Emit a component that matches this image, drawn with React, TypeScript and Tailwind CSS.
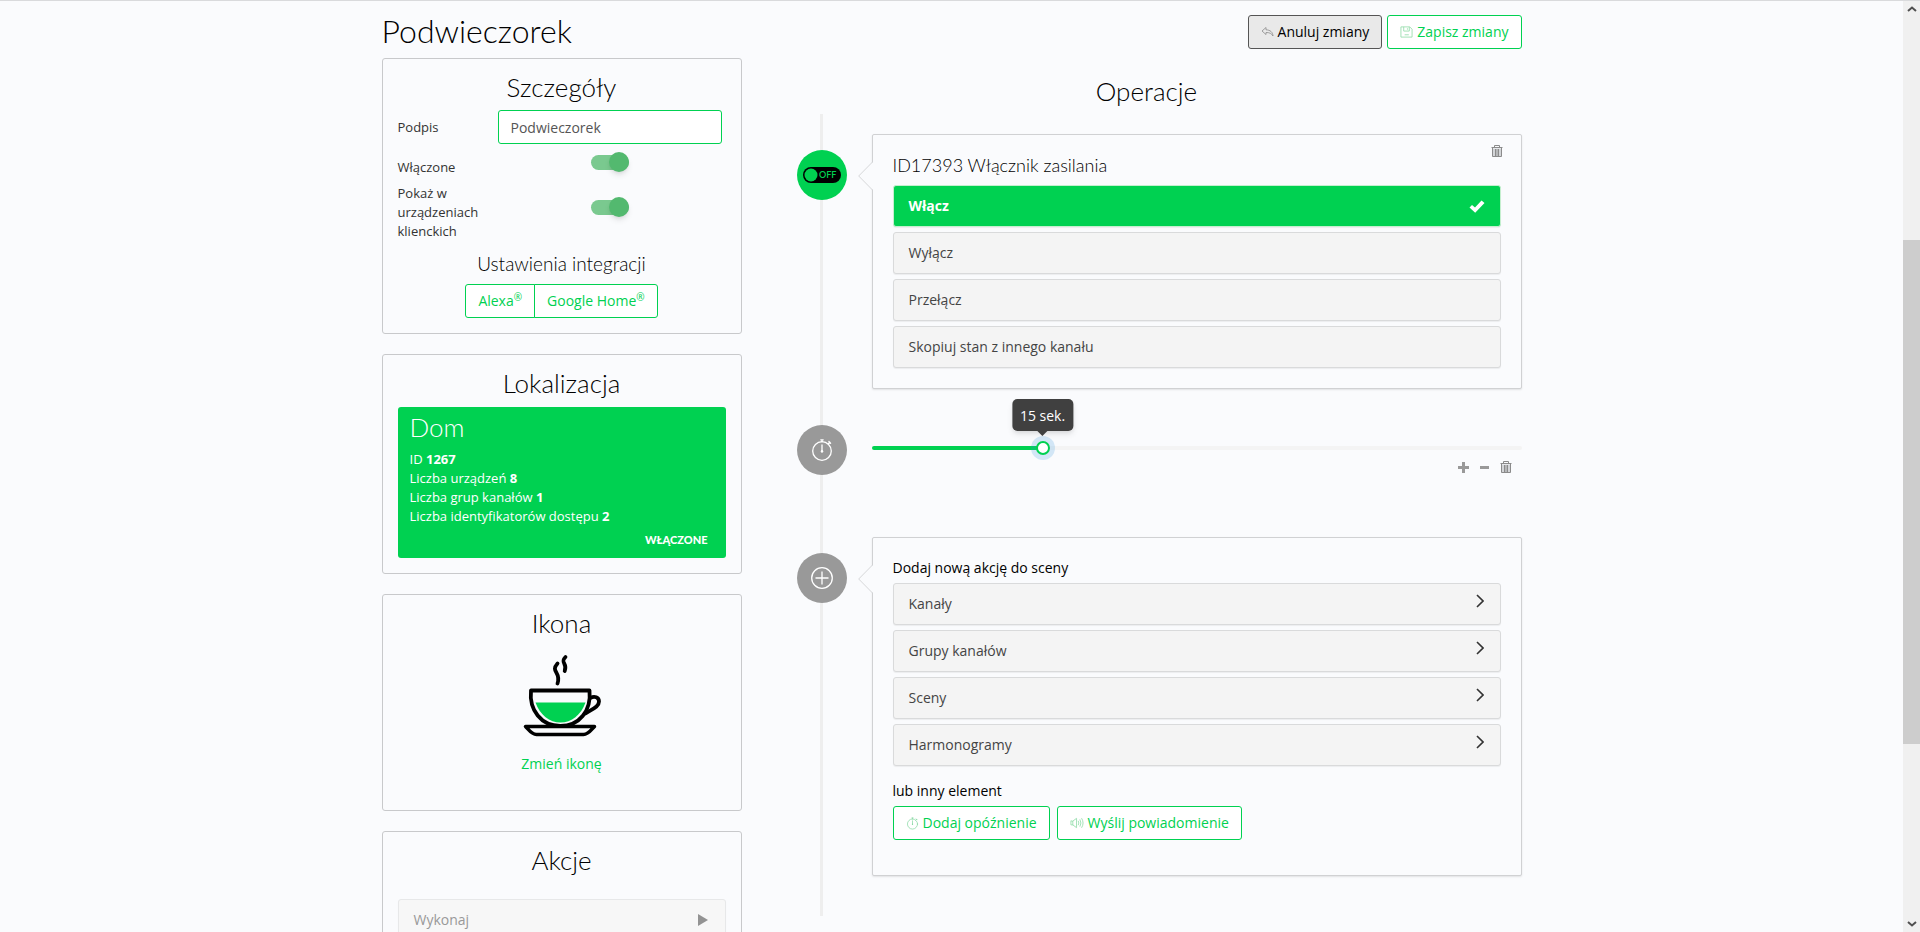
import React, { useState } from "react";

const heading = "font-[Lato,sans-serif] font-light text-black";
const outlineBtn =
  "h-[34px] rounded-[3px] border border-[#00d151] bg-white px-3 text-sm text-[#00d151] flex items-center gap-1";

function Card({ title, children, className = "" }: { title: string; children: React.ReactNode; className?: string }) {
  return (
    <section className={`rounded-[3px] border border-[#c8c9cb] px-[15px] pt-[13px] ${className}`}>
      <h2 className={`${heading} text-center text-[26px] leading-[30px]`}>{title}</h2>
      {children}
    </section>
  );
}

function Toggle({ id }: { id: string }) {
  const [on, setOn] = useState(true);
  return (
    <span className="relative flex h-5 w-[38px] items-center">
      <input
        id={id}
        type="checkbox"
        checked={on}
        onChange={() => setOn(!on)}
        className="peer h-[15px] w-full cursor-pointer appearance-none rounded-full bg-gray-300 checked:bg-[#7ac98f]"
      />
      <span className="pointer-events-none absolute left-0 size-5 rounded-full bg-white shadow-md peer-checked:left-[18px] peer-checked:bg-[#53b96f]" />
    </span>
  );
}

function TrashIcon() {
  return (
    <svg viewBox="0 0 12 14" className="h-[14px] w-3" fill="none" stroke="#8b8b8b" strokeWidth="1">
      <path d="M1.500 4.500h9v8h-9z" fill="#d3d5d8" stroke="none" />
      <path d="M.5 3.500h11M3.500 3V1.500h5V3M1.500 4v8.500h9V4M4.500 5v7M7.500 5v7" />
      <path d="M6 5v7" strokeWidth="0.800" />
    </svg>
  );
}

function UndoIcon() {
  return (
    <svg viewBox="0 0 13 12" className="h-3 w-[13px]" fill="none" stroke="#8a8a8a" strokeWidth="0.8" strokeLinejoin="round">
      <path d="M5 1.500 1 5l4 3.500V6.500c3.500 0 5.500.8 7 3.500-.3-3.800-2.500-6-7-6.200z" />
    </svg>
  );
}

function SaveIcon() {
  return (
    <svg viewBox="0 0 14 14" className="h-[14px] w-[13px]" fill="none" stroke="#93dcaa" strokeWidth="0.9">
      <path d="M1 1.500h9.500L13 4v8.500H1zM4 1.500V6h6V1.500M8 3v1.500M5 10h4.500" />
    </svg>
  );
}

function StopwatchIcon({ className }: { className: string }) {
  return (
    <svg viewBox="0 0 24 24" className={className} fill="none" stroke="currentColor" strokeWidth="1.300" strokeLinecap="round">
      <circle cx="12" cy="13" r="9.300" />
      <path d="M12 7v7M12 1.800v2M10.800 1.800h2.400M18.300 5.700l1.500-1.500M18.900 3.500l1.700 1.700" />
      <circle cx="12" cy="13.300" r="1.200" fill="currentColor" stroke="none" />
    </svg>
  );
}

function VolumeIcon() {
  return (
    <svg viewBox="0 0 15 12" className="h-3 w-[14px]" fill="none" stroke="#93dcaa" strokeWidth="0.9" strokeLinejoin="round" strokeLinecap="round">
      <path d="M1 4v4h2l4 3V1L3 4zM3 4v4M9 4q1.200 2 0 4M10.800 2.500q2 3.500 0 7M12.600 1.200q3 4.800 0 9.600" />
    </svg>
  );
}

function CupIcon() {
  return (
    <svg viewBox="0 0 78 83" className="h-[83px] w-[78px]" fill="none" stroke="#000" strokeWidth="3.800" strokeLinecap="round" strokeLinejoin="round">
      <path d="M12.500 48.500h50C58 61 48.500 68.500 37.500 68.500S17 61 12.500 48.500z" fill="#00d151" stroke="none" />
      <path d="M8 36.500h58.500c2 20-10 35.500-29.200 35.500S6 56 8 36.500z" />
      <path d="M67.500 44c4-2.500 8.500-.5 8.500 3.500 0 6-8 8-13.500 12" />
      <path d="M2.500 72.500h69c-3.500 3.500-6 8-11 8H13.500c-5 0-7.500-4.500-11-8z" strokeWidth="3.500" />
      <path d="M34.500 9.500c-7.500 8.500 4 8 0 20M42.500 3c-6 6 2.500 6-.8 14" />
    </svg>
  );
}

function Bubble({ children, className = "" }: { children: React.ReactNode; className?: string }) {
  return (
    <div className={`relative flex-1 rounded-[2px] border border-[#d0d1d3] bg-[#fafbfd] px-5 shadow-[0_1px_2px_rgba(0,0,0,0.1)] ${className}`}>
      <svg viewBox="0 0 15 28" className="absolute top-[27px] -left-[15px] h-7 w-[15px]">
        <path d="M15 0 1 14l14 14z" fill="#fafbfd" />
        <path d="M14.500 0 .7 14l13.800 14" fill="none" stroke="#d6d7d9" />
      </svg>
      {children}
    </div>
  );
}

function Step({ badge, green, children }: { badge: React.ReactNode; green?: boolean; children: React.ReactNode }) {
  return (
    <li className="flex gap-[25px]">
      <div className={`z-10 mt-4 flex size-[50px] shrink-0 items-center justify-center rounded-full text-white ${green ? "bg-[#00d151]" : "bg-[#999]"}`}>
        {badge}
      </div>
      {children}
    </li>
  );
}

const optionBase = "flex h-[42px] w-full items-center justify-between rounded-[3px] border px-[15px] text-left text-sm shadow-[0_1px_1px_rgba(0,0,0,0.06)]";

const modes = ["Włącz", "Wyłącz", "Przełącz", "Skopiuj stan z innego kanału"];
const subjects = ["Kanały", "Grupy kanałów", "Sceny", "Harmonogramy"];
const facts = [
  ["ID", "1267"],
  ["Liczba urządzeń", "8"],
  ["Liczba grup kanałów", "1"],
  ["Liczba identyfikatorów dostępu", "2"],
];

export default function App() {
  const [mode, setMode] = useState("Włącz");
  const [delay, setDelay] = useState(15);
  const percent = (delay / 57) * 100;

  return (
    <div className="flex h-screen overflow-hidden border-t border-[#d9dadc] bg-[#fafbfd] font-['Open_Sans',sans-serif] text-sm text-[#333]">
      <main className="min-w-0 flex-1 overflow-hidden">
        <div className="mx-auto max-w-[1170px] px-[15px]">
          <header className="flex items-start justify-between pt-[14px]">
            <h1 className={`${heading} text-[32px] leading-8`}>Podwieczorek</h1>
            <div className="flex gap-[5px]">
              <button className="flex h-[34px] items-center gap-1 rounded-[3px] border border-[#555] bg-[#e9e9e9] px-3 text-sm text-black">
                <UndoIcon />
                Anuluj zmiany
              </button>
              <button className={outlineBtn}>
                <SaveIcon />
                Zapisz zmiany
              </button>
            </div>
          </header>

          <div className="grid grid-cols-[minmax(0,360fr)_minmax(0,750fr)] gap-[30px]">
            <div className="mt-[9px] flex flex-col gap-5">
              <Card title="Szczegóły" className="pb-[15px]">
                <div className="mt-2 mr-1 grid grid-cols-[100px_1fr] text-[13px] leading-[19px]">
                  <label htmlFor="caption" className="self-center">Podpis</label>
                  <input id="caption" defaultValue="Podwieczorek" className="h-[34px] w-full rounded-[3px] border border-[#00d151] bg-white px-3 text-sm text-[#555] outline-none" />
                  <label htmlFor="enabled" className="mt-[14px]">Włączone</label>
                  <div className="mt-2 flex justify-center"><Toggle id="enabled" /></div>
                  <label htmlFor="visible" className="mt-[7px]">Pokaż w urządzeniach klienckich</label>
                  <div className="mt-5 flex justify-center"><Toggle id="visible" /></div>
                </div>
                <h3 className={`${heading} mt-[11px] text-center text-[19px] leading-6`}>Ustawienia integracji</h3>
                <div className="mt-2 flex justify-center">
                  <button className="h-[34px] rounded-l-[3px] border border-[#00d151] bg-white px-3 text-[#00d151]">
                    Alexa<sup className="text-[10px]">®</sup>
                  </button>
                  <button className="-ml-px h-[34px] rounded-r-[3px] border border-[#00d151] bg-white px-3 text-[#00d151]">
                    Google Home<sup className="text-[10px]">®</sup>
                  </button>
                </div>
              </Card>

              <Card title="Lokalizacja" className="pb-[15px]">
                <div className="mt-[9px] rounded-[3px] bg-[#00d151] px-3 pt-[5px] pb-[9px] text-[13px] leading-[19px] text-white">
                  <h3 className="mb-2 font-[Lato,sans-serif] text-[26px] leading-[30px] font-light">Dom</h3>
                  {facts.map(([name, value]) => (
                    <p key={name} className="font-medium">{name} <b className="font-bold">{value}</b></p>
                  ))}
                  <p className="mt-1 pr-[6px] text-right font-[Lato,sans-serif] text-[11px] font-black">WŁĄCZONE</p>
                </div>
              </Card>

              <Card title="Ikona" className="pb-9">
                <div className="mt-[16px] flex flex-col items-center">
                  <CupIcon />
                  <a href="#icon" className="mt-[17px] leading-5 text-[#00d151]">Zmień ikonę</a>
                </div>
              </Card>

              <Card title="Akcje" className="pb-5">
                <button disabled className={`${optionBase} mt-6 border-[#e7e8e9] bg-[#f7f7f7] text-[#999]`}>
                  Wykonaj
                  <svg viewBox="0 0 10 12" className="mr-[2px] h-3 w-[10px]" fill="#939393"><path d="M0 0l10 6-10 6z" /></svg>
                </button>
              </Card>
            </div>

            <div>
              <h2 className={`${heading} mt-[27px] text-center text-[26px] leading-[30px]`}>Operacje</h2>
              <div className="relative mt-2 ml-[25px] py-5 before:absolute before:inset-y-0 before:left-[23px] before:w-[3px] before:bg-[#eee]">
                <ul className="flex flex-col gap-5 pb-5">
                  <Step
                    green
                    badge={
                      <svg viewBox="0 0 38 16" className="h-4 w-[38px]">
                        <rect width="38" height="16" rx="8" />
                        <circle cx="8" cy="8" r="6.500" fill="#00d151" />
                        <text x="16" y="11.300" fontSize="9" fontWeight="600" fontFamily="Lato, sans-serif" fill="#00d151">OFF</text>
                      </svg>
                    }
                  >
                    <Bubble className="pt-[18px] pb-5">
                      <button aria-label="Usuń operację" className="absolute top-[9px] right-[18px]"><TrashIcon /></button>
                      <h3 className={`${heading} mb-2 text-lg leading-6`}>ID17393 Włącznik zasilania</h3>
                      <div className="flex flex-col gap-[5px]">
                        {modes.map((name) => (
                          <button
                            key={name}
                            onClick={() => setMode(name)}
                            className={`${optionBase} ${mode === name ? "border-[#c5efcf] bg-[#00d151] font-bold text-white" : "border-[#d9dadb] bg-[#f4f4f4] text-[#444]"}`}
                          >
                            {name}
                            {mode === name && (
                              <svg viewBox="0 0 16 13" className="h-[13px] w-4" fill="#fff"><path d="M.5 7.500 3 5l3 2.500L12.500.5 15.500 3l-9.300 9.700z" /></svg>
                            )}
                          </button>
                        ))}
                      </div>
                    </Bubble>
                  </Step>

                  <Step badge={<StopwatchIcon className="size-6" />}>
                    <div className="h-[108px] flex-1 pt-[37px]">
                      <div className="relative h-1 rounded-full bg-[#f4f4f4]">
                        <div className="h-1 rounded-full bg-[#00d151]" style={{ width: `${percent}%` }} />
                        <div className="absolute top-1/2 flex size-6 -translate-x-1/2 -translate-y-1/2 items-center justify-center rounded-full bg-[#3498db33]" style={{ left: `${percent}%` }}>
                          <span className="size-[14px] rounded-full border-2 border-[#00d151] bg-white" />
                        </div>
                        <div className="absolute bottom-[19px] flex h-8 -translate-x-1/2 items-center rounded-[5px] bg-[#404040] px-2 pt-px font-medium whitespace-nowrap text-white shadow-md" style={{ left: `${percent}%` }}>
                          {delay} sek.
                          <span className="absolute top-full left-1/2 -translate-x-1/2 border-x-[5px] border-t-[5px] border-x-transparent border-t-[#404040]" />
                        </div>
                        <input
                          type="range"
                          aria-label="Opóźnienie"
                          min={0}
                          max={57}
                          value={delay}
                          onChange={(e) => setDelay(Number(e.target.value))}
                          className="absolute inset-x-0 -top-2 h-5 w-full cursor-pointer opacity-0"
                        />
                      </div>
                      <div className="mt-[10px] mr-[10px] flex items-center justify-end gap-[11px]">
                        <button aria-label="Zwiększ"><svg viewBox="0 0 11 11" className="size-[11px]" fill="#999"><path d="M4 0h3v4h4v3H7v4H4V7H0V4h4z" /></svg></button>
                        <button aria-label="Zmniejsz"><svg viewBox="0 0 9 11" className="h-[11px] w-[9px]" fill="#999"><path d="M0 4h9v3H0z" /></svg></button>
                        <button aria-label="Usuń opóźnienie"><TrashIcon /></button>
                      </div>
                    </div>
                  </Step>

                  <Step
                    badge={
                      <svg viewBox="0 0 24 24" className="size-6" fill="none" stroke="#fff" strokeWidth="1.300">
                        <circle cx="12" cy="12" r="10.300" />
                        <path d="M12 5.500v13M5.500 12h13" />
                      </svg>
                    }
                  >
                    <Bubble className="pt-5 pb-[35px]">
                      <p className="mb-[5px] leading-5 font-medium text-black">Dodaj nową akcję do sceny</p>
                      <div className="flex flex-col gap-[5px]">
                        {subjects.map((name) => (
                          <button key={name} className={`${optionBase} border-[#d9dadb] bg-[#f4f4f4] text-[#444]`}>
                            {name}
                            <svg viewBox="0 0 8 14" className="mr-px mb-[6px] h-[14px] w-2" fill="none" stroke="#333" strokeWidth="1.600"><path d="M1 1l6 6-6 6" /></svg>
                          </button>
                        ))}
                      </div>
                      <p className="mt-[15px] mb-[5px] leading-5 font-medium text-black">lub inny element</p>
                      <div className="flex gap-[7px]">
                        <button className={outlineBtn}><StopwatchIcon className="size-[13px] text-[#83d79f]" />Dodaj opóźnienie</button>
                        <button className={outlineBtn}><VolumeIcon />Wyślij powiadomienie</button>
                      </div>
                    </Bubble>
                  </Step>
                </ul>
              </div>
            </div>
          </div>
        </div>
      </main>

      <div aria-hidden="true" className="flex w-[17px] shrink-0 flex-col items-center bg-[#f0f0f0]">
        <svg viewBox="0 0 10 6" className="my-[5px] h-[6px] w-[10px]" fill="none" stroke="#505050" strokeWidth="2"><path d="M1 5l4-3.500L9 5" /></svg>
        <div className="flex w-full flex-1 flex-col">
          <div className="flex-[223]" />
          <div className="flex-[504] bg-[#cdcdcd]" />
          <div className="flex-[172]" />
        </div>
        <svg viewBox="0 0 10 6" className="my-[5px] h-[6px] w-[10px]" fill="none" stroke="#505050" strokeWidth="2"><path d="M1 1l4 3.500L9 1" /></svg>
      </div>
    </div>
  );
}
